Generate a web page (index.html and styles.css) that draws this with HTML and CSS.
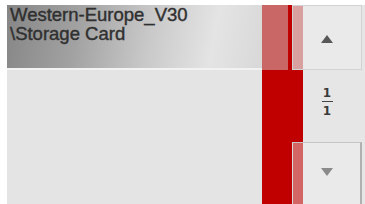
FILE: index.html
```html
<!DOCTYPE html>
<html>
<head>
<meta charset="utf-8">
<link rel="stylesheet" href="styles.css">
</head>
<body>
<div class="screen">
  <div class="main">
    <div class="list">
      <div class="item">
        <div class="line">Western-Europe_V30</div>
        <div class="line">\Storage Card</div>
      </div>
    </div>
    <div class="scroll">
      <div class="thumb"><span class="grip"></span></div>
    </div>
    <div class="side">
      <div class="btn up"><span class="tri-up"></span></div>
      <div class="page">
        <span class="num">1</span>
        <span class="bar"></span>
        <span class="num">1</span>
      </div>
      <div class="btn down"><span class="tri-down"></span></div>
    </div>
  </div>
</div>
</body>
</html>
```
FILE: styles.css
```css
html, body {
  margin: 0;
  padding: 0;
  background: #ffffff;
}
.screen {
  width: 365px;
  height: 204px;
  box-sizing: border-box;
  padding: 5px 0 0 7px;
  overflow: hidden;
}
.main {
  display: flex;
  height: 199px;
  background: #e4e4e4;
}
.list {
  width: 255px;
}
.item {
  height: 65px;
  border-bottom: 2px solid #f2f2f2;
  background: linear-gradient(100deg, #868686 0%, #a2a2a2 28%, #c8c8c8 55%, #e4e4e4 80%, #d8d8d8 100%);
  padding: 0 0 0 3px;
  box-sizing: border-box;
  font-family: "Liberation Sans", Arial, sans-serif;
  font-size: 18.5px;
  line-height: 19px;
  color: #303030;
  -webkit-text-stroke: 0.4px #303030;
}
.scroll {
  width: 41px;
  background: #c00000;
}
.thumb {
  height: 65px;
  background: #c96666;
  display: flex;
}
.grip {
  width: 4px;
  margin-left: 26px;
  background: #c00000;
}
.side {
  width: 62px;
  display: flex;
  flex-direction: column;
  background: #e6e6e6;
}
.btn {
  margin-left: -11px;
  margin-right: 3px;
  display: flex;
  align-items: center;
  justify-content: center;
  box-sizing: border-box;
}
.up {
  height: 65px;
  background: rgba(240, 240, 240, 0.42);
  border: 1px solid #d2d2d2;
}
.down {
  flex: 1;
  background: rgba(240, 240, 240, 0.42);
  border-top: 1px solid #c4c4c4;
  border-left: 1px solid #d8d8d8;
  border-right: 2px solid #b0b0b0;
  padding-bottom: 4px;
}
.tri-up {
  width: 0;
  height: 0;
  border-left: 6px solid transparent;
  border-right: 6px solid transparent;
  border-bottom: 8px solid #585858;
  margin-top: 2px;
}
.tri-down {
  width: 0;
  height: 0;
  border-left: 6px solid transparent;
  border-right: 6px solid transparent;
  border-top: 8px solid #8a8a8a;
}
.page {
  height: 72px;
  display: flex;
  flex-direction: column;
  align-items: center;
  justify-content: center;
  padding-right: 14px;
  padding-bottom: 8px;
  box-sizing: border-box;
  font-family: "DejaVu Sans", sans-serif;
  font-weight: bold;
  font-size: 12px;
  line-height: 11px;
  color: #3a3a3a;
}
.bar {
  width: 11px;
  height: 1px;
  background: #444;
  margin: 2px 0 4px;
}
```
